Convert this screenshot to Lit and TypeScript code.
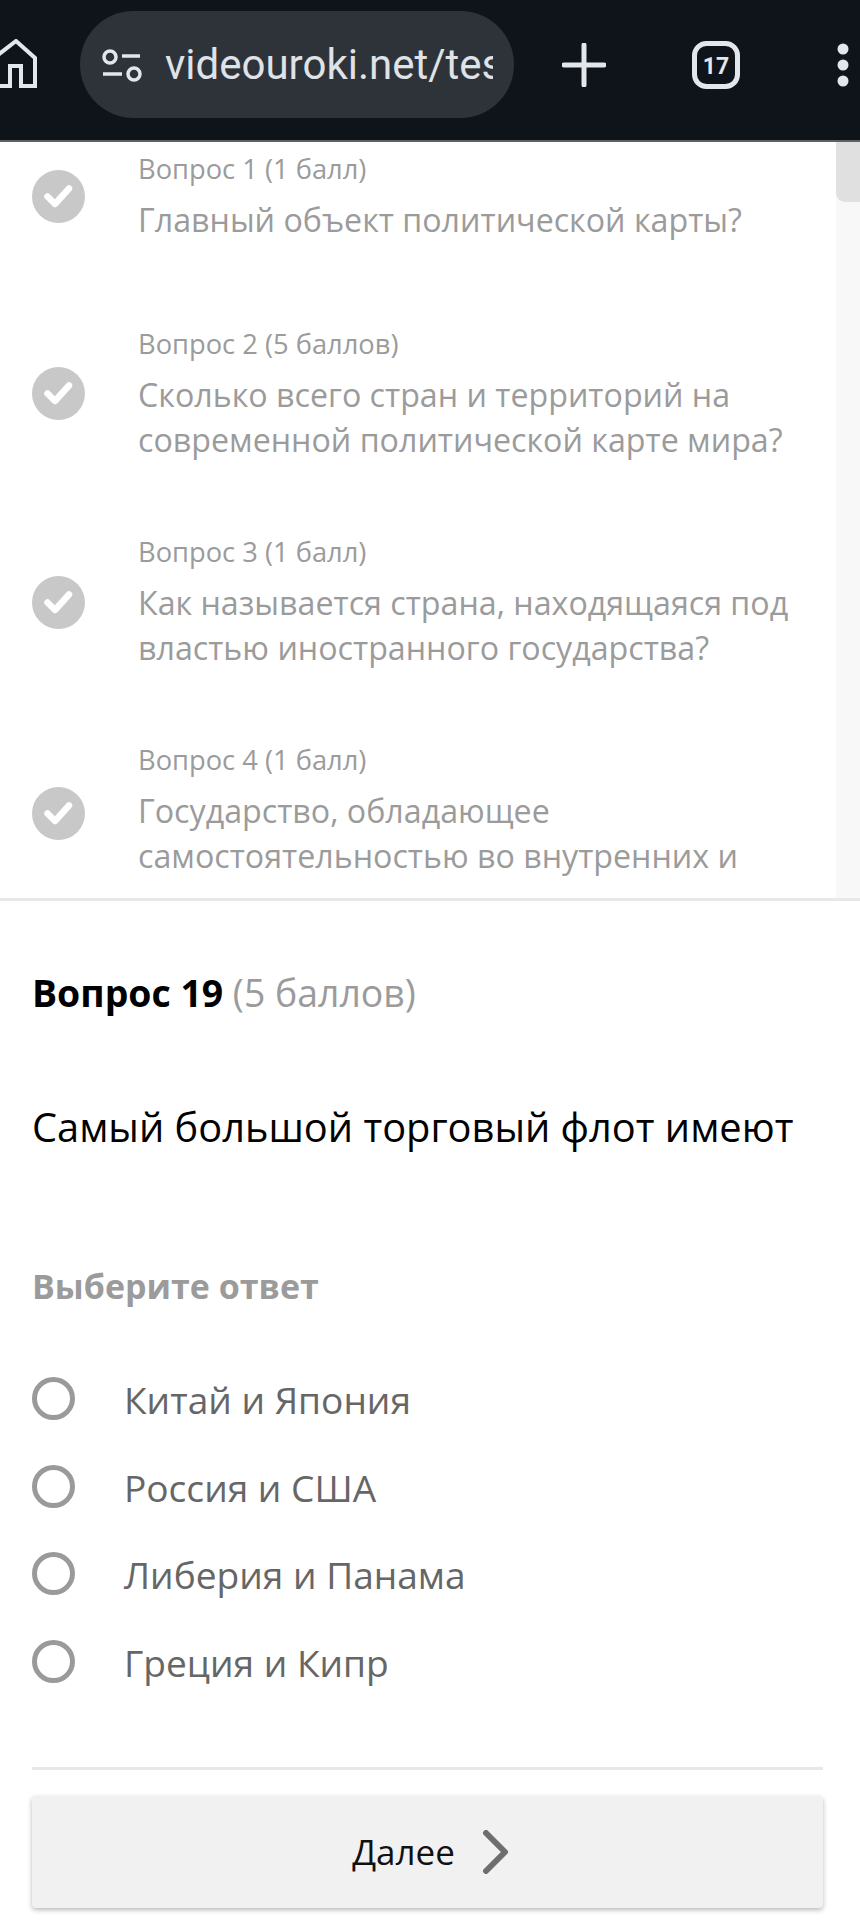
import { LitElement, html, css, svg } from "lit";
import { customElement } from "lit/decorators.js";

const QUESTIONS = [
  { cls: "one", title: "Вопрос 1 (1 балл)", lines: ["Главный объект политической карты?"] },
  { cls: "", title: "Вопрос 2 (5 баллов)", lines: ["Сколько всего стран и территорий на", "современной политической карте мира?"] },
  { cls: "three", title: "Вопрос 3 (1 балл)", lines: ["Как называется страна, находящаяся под", "властью иностранного государства?"] },
  { cls: "four", title: "Вопрос 4 (1 балл)", lines: ["Государство, обладающее", "самостоятельностью во внутренних и"] },
];
const OPTIONS = ["Китай и Япония", "Россия и США", "Либерия и Панама", "Греция и Кипр"];

@customElement("app-root")
export class AppRoot extends LitElement {
  static styles = css`
    :host {
      display: block;
      width: 860px;
      height: 1920px;
      overflow: hidden;
      background: #fff;
      font-family: "Open Sans", "Noto Sans", sans-serif;
    }
    .bar {
      box-sizing: border-box;
      height: 142px;
      padding-bottom: 11px;
      background: #0f141a;
      border-bottom: 2px solid #5d6165;
      display: flex;
      align-items: center;
      color: #e3e6ea;
    }
    .bar svg { display: block; flex: none; }
    .pill {
      box-sizing: border-box;
      width: 434px;
      height: 107px;
      margin-left: 38px;
      border-radius: 54px;
      background: #2e3339;
      display: flex;
      align-items: center;
      padding-left: 20px;
    }
    .url {
      width: 328px;
      margin-left: 19px;
      overflow: hidden;
      white-space: nowrap;
      font: 400 42px/50px Roboto, sans-serif;
      color: #dfe2e6;
    }
    .plus { margin-left: 48px; }
    .tab { margin-left: 86px; }
    .dots { margin-left: 97px; }

    .list {
      height: 756px;
      display: flex;
      overflow: hidden;
      border-bottom: 3px solid #e8e8e8;
    }
    .items { flex: 1; padding-top: 7px; min-width: 0; }
    .track { flex: none; width: 24px; background: #f8f8f8; }
    .thumb { height: 60px; background: #e0e0e0; border-bottom-left-radius: 9px; }
    .row { display: flex; margin-bottom: 69px; }
    .row.one { margin-bottom: 81px; }
    .check { flex: none; margin: 43px 53px 0 32px; display: block; }
    .one .check { margin-top: 21px; }
    .three .check { margin-top: 44px; }
    .four .check { margin-top: 47px; }
    .t {
      font-size: 27.3px;
      line-height: 40px;
      color: #9b9b9b;
      margin-bottom: 8px;
    }
    .q {
      font-size: 32.2px;
      line-height: 45.5px;
      color: #9b9b9b;
      white-space: nowrap;
    }

    .main { padding: 0 37px 0 32px; }
    .head {
      margin-top: 67px;
      font-size: 37.4px;
      line-height: 50px;
      color: #9b9b9b;
    }
    .head b { color: #000; font-weight: 700; }
    .text {
      margin-top: 84px;
      font-size: 39.8px;
      line-height: 50px;
      color: #000;
      white-space: nowrap;
    }
    .label {
      margin-top: 114px;
      font-size: 34px;
      line-height: 40px;
      font-weight: 700;
      color: #9b9b9b;
    }
    .opts { margin-top: 72px; display: flex; flex-direction: column; gap: 43.5px; }
    .opt { display: flex; align-items: center; height: 44px; }
    .radio {
      flex: none;
      box-sizing: border-box;
      width: 43px;
      height: 43px;
      border: 5.5px solid #9a9a9a;
      border-radius: 50%;
      margin-right: 49px;
      margin-top: -3px;
    }
    .opt span { font-size: 37.1px; line-height: 44px; color: #666; }
    .rule { margin-top: 82px; height: 3px; background: #e8e8e8; }
    .btn {
      margin-top: 26px;
      height: 112px;
      background: #f1f1f1;
      border-radius: 4px;
      box-shadow: 0 2px 5px rgba(0, 0, 0, 0.28);
      display: flex;
      align-items: center;
      justify-content: center;
      gap: 26px;
      padding-left: 6px;
      font-size: 35px;
      color: #111;
    }
  `;

  private check() {
    return html`<svg class="check" width="53" height="53" viewBox="0 0 53 53">
      <circle cx="26.5" cy="26.5" r="26.5" fill="#c8c8c8"></circle>
      <path d="M15.5 26.5 L23 34 L37 18.5" fill="none" stroke="#fff" stroke-width="6.5" stroke-linecap="round" stroke-linejoin="round"></path>
    </svg>`;
  }

  render() {
    return html`
      <div class="bar">
        <svg width="42" height="52" viewBox="0 0 42 52" fill="none" stroke="currentColor" stroke-width="4">
          <path d="M-6 19 L16 2 L35 19 V47 H21 V27 H10 V47 H-6"></path>
        </svg>
        <div class="pill">
          <svg width="46" height="34" viewBox="0 0 46 34" fill="none" stroke="currentColor" stroke-width="3.5">
            ${svg`<circle cx="10" cy="9" r="6"></circle>
            <path d="M22 8 H40 M3 26 H22"></path>
            <circle cx="34" cy="26" r="6"></circle>`}
          </svg>
          <div class="url">videouroki.net/test</div>
        </div>
        <svg class="plus" width="44" height="44" viewBox="0 0 44 44" fill="none" stroke="currentColor" stroke-width="5" stroke-linecap="round">
          <path d="M22 2 V42 M2 22 H42"></path>
        </svg>
        <svg class="tab" width="48" height="48" viewBox="0 0 48 48">
          <rect x="2.5" y="2.5" width="43" height="43" rx="12" fill="none" stroke="currentColor" stroke-width="5"></rect>
          <text x="24" y="32.5" text-anchor="middle" font-family="Roboto, sans-serif" font-weight="700" font-size="23" fill="currentColor">17</text>
        </svg>
        <svg class="dots" width="12" height="44" viewBox="0 0 12 44" fill="currentColor">
          <circle cx="6" cy="6" r="5.5"></circle>
          <circle cx="6" cy="22" r="5.5"></circle>
          <circle cx="6" cy="38" r="5.5"></circle>
        </svg>
      </div>

      <div class="list">
        <div class="items">
          ${QUESTIONS.map(
            (q) => html`<div class="row ${q.cls}">
              ${this.check()}
              <div>
                <div class="t">${q.title}</div>
                ${q.lines.map((l) => html`<div class="q">${l}</div>`)}
              </div>
            </div>`
          )}
        </div>
        <div class="track"><div class="thumb"></div></div>
      </div>

      <div class="main">
        <div class="head"><b>Вопрос 19</b> (5 баллов)</div>
        <div class="text">Самый большой торговый флот имеют</div>
        <div class="label">Выберите ответ</div>
        <div class="opts">
          ${OPTIONS.map((o) => html`<div class="opt"><div class="radio"></div><span>${o}</span></div>`)}
        </div>
        <div class="rule"></div>
        <div class="btn">
          Далее
          <svg width="28" height="44" viewBox="0 0 28 44" fill="none" stroke="#6e6e6e" stroke-width="6" stroke-linecap="round" stroke-linejoin="round">
            <path d="M5 3 L24 22 L5 41"></path>
          </svg>
        </div>
      </div>
    `;
  }
}
